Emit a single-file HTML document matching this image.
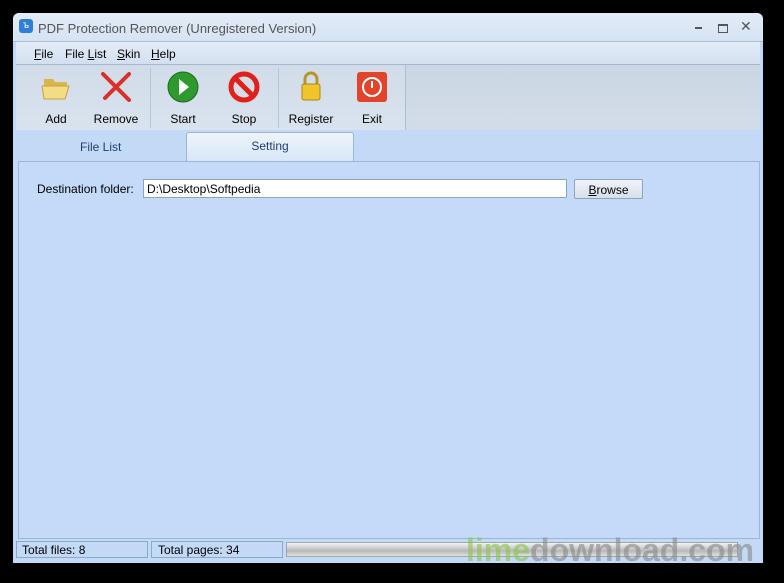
<!DOCTYPE html>
<html><head><style>
body{margin:0;width:784px;height:583px;background:#000;position:relative;overflow:hidden;font-family:"Liberation Sans",sans-serif;font-size:12px;color:#000}
.a{position:absolute}
.win{left:13px;top:13px;width:750px;height:550px;background:#c3daf7;border-radius:6px 6px 0 0}
.title{left:13px;top:13px;width:750px;height:28px;background:linear-gradient(#e3ecf8,#d6e3f3);border-radius:6px 6px 0 0;border-bottom:1px solid #a9bcd6}
.menu{left:16px;top:42px;width:744px;height:22px;background:linear-gradient(#e4ecf7,#d3dff0);border-bottom:1px solid #a6b8d0}
.tb{left:16px;top:65px;width:744px;height:65px;background:linear-gradient(#d2dce8,#d9e3ee)}
.btn{position:absolute;top:0;width:60px;height:65px;text-align:center}
.btn span{position:absolute;bottom:4px;left:0;right:0}
.sep{position:absolute;top:3px;width:1px;height:60px;background:#b7c6d8}
</style></head><body>
<div class="a win"></div>
<div class="a title"></div>
<div class="a" style="left:19px;top:19px;width:14px;height:14px;background:#2f7ed8;border-radius:3px;color:#fff;font-size:10px;text-align:center;line-height:14px">ъ</div>
<div class="a" style="left:38px;top:21px;font-size:13px;color:#555">PDF Protection Remover (Unregistered Version)</div>
<div class="a" style="left:695px;top:27px;width:7px;height:2px;background:#555"></div>
<div class="a" style="left:718px;top:24px;width:8px;height:6px;border:1px solid #555;border-top-width:2px"></div>
<div class="a" style="left:740px;top:18px;font-size:14px;color:#555">✕</div>
<div class="a menu"></div>
<div class="a" style="left:34px;top:47px"><u>F</u>ile</div>
<div class="a" style="left:65px;top:47px">File <u>L</u>ist</div>
<div class="a" style="left:117px;top:47px"><u>S</u>kin</div>
<div class="a" style="left:151px;top:47px"><u>H</u>elp</div>
<div class="a tb">
<div class="btn" style="left:10px"><svg width="34" height="34" style="margin-top:6px" viewBox="0 0 34 34"><path d="M5 8h9l2 3h12v6H5z" fill="#d9b54a"/><path d="M3 15h27l-4 13H5z" fill="#f3dc84" stroke="#c9a13c"/></svg><span>Add</span></div>
<div class="btn" style="left:70px"><svg width="34" height="34" style="margin-top:5px" viewBox="0 0 34 34"><path d="M4 4L30 30M30 4L6 28" stroke="#d8302a" stroke-width="4" stroke-linecap="round"/></svg><span>Remove</span></div>
<div class="sep" style="left:134px"></div>
<div class="btn" style="left:137px"><svg width="34" height="34" style="margin-top:5px" viewBox="0 0 34 34"><circle cx="17" cy="17" r="15" fill="#2e9a2e" stroke="#1d6b1d"/><path d="M13 9l10 8-10 8z" fill="#fff"/></svg><span>Start</span></div>
<div class="btn" style="left:198px"><svg width="34" height="34" style="margin-top:5px" viewBox="0 0 34 34"><circle cx="17" cy="17" r="13" fill="none" stroke="#e0201c" stroke-width="5"/><path d="M9 9L25 25" stroke="#e0201c" stroke-width="5"/></svg><span>Stop</span></div>
<div class="sep" style="left:262px"></div>
<div class="btn" style="left:265px"><svg width="34" height="34" style="margin-top:4px" viewBox="0 0 34 34"><path d="M11 15V10a6 6 0 0 1 12 0v5" fill="none" stroke="#b8952a" stroke-width="3"/><rect x="8" y="15" width="18" height="16" rx="2" fill="#f0c52c" stroke="#a9851d"/></svg><span>Register</span></div>
<div class="btn" style="left:326px"><svg width="34" height="34" style="margin-top:5px" viewBox="0 0 34 34"><rect x="2" y="2" width="30" height="30" rx="3" fill="#e0452c"/><circle cx="17" cy="17" r="9" fill="none" stroke="#fff" stroke-width="2"/><path d="M17 11v7" stroke="#fff" stroke-width="2"/></svg><span>Exit</span></div>
<div class="sep" style="left:389px;top:0;height:65px;background:#aebed2"></div>
</div>
<div class="a" style="left:406px;top:65px;width:354px;height:65px;background:linear-gradient(#cbd6e3,#d3dde9)"></div>
<div class="a" style="left:80px;top:140px;color:#1f3f72">File List</div>
<div class="a" style="left:186px;top:132px;width:166px;height:29px;background:linear-gradient(#eef4fb,#d7e6f7);border:1px solid #9fb6d2;border-bottom:none;border-radius:3px 3px 0 0;text-align:center;line-height:26px;color:#1f3f72">Setting</div>
<div class="a" style="left:18px;top:161px;width:740px;height:376px;background:#c3daf8;border:1px solid #9fb6d2"></div>
<div class="a" style="left:37px;top:182px">Destination folder:</div>
<div class="a" style="left:143px;top:179px;width:424px;height:19px;background:#fff;border:1px solid #8ea4c0;line-height:19px;padding-left:3px;box-sizing:border-box">D:\Desktop\Softpedia</div>
<div class="a" style="left:574px;top:179px;width:69px;height:20px;background:linear-gradient(#f0f4f9,#d6dfea);border:1px solid #8ea4c0;border-radius:2px;text-align:center;line-height:20px;box-sizing:border-box"><u>B</u>rowse</div>
<div class="a" style="left:16px;top:541px;width:132px;height:17px;border:1px solid #8fa8c8;line-height:17px;padding-left:5px;box-sizing:border-box">Total files: 8</div>
<div class="a" style="left:151px;top:541px;width:132px;height:17px;border:1px solid #8fa8c8;line-height:17px;padding-left:6px;box-sizing:border-box">Total pages: 34</div>
<div class="a" style="left:286px;top:542px;width:452px;height:15px;background:linear-gradient(#f4f4f4,#b8b8b8 60%,#e0e0e0);border:1px solid #9aa;box-sizing:border-box"></div>
<div class="a" style="left:466px;top:532px;font-size:32px;font-weight:bold;color:#8bc34a;opacity:.6">lime<span style="color:#888">download.com</span></div>
</body></html>
